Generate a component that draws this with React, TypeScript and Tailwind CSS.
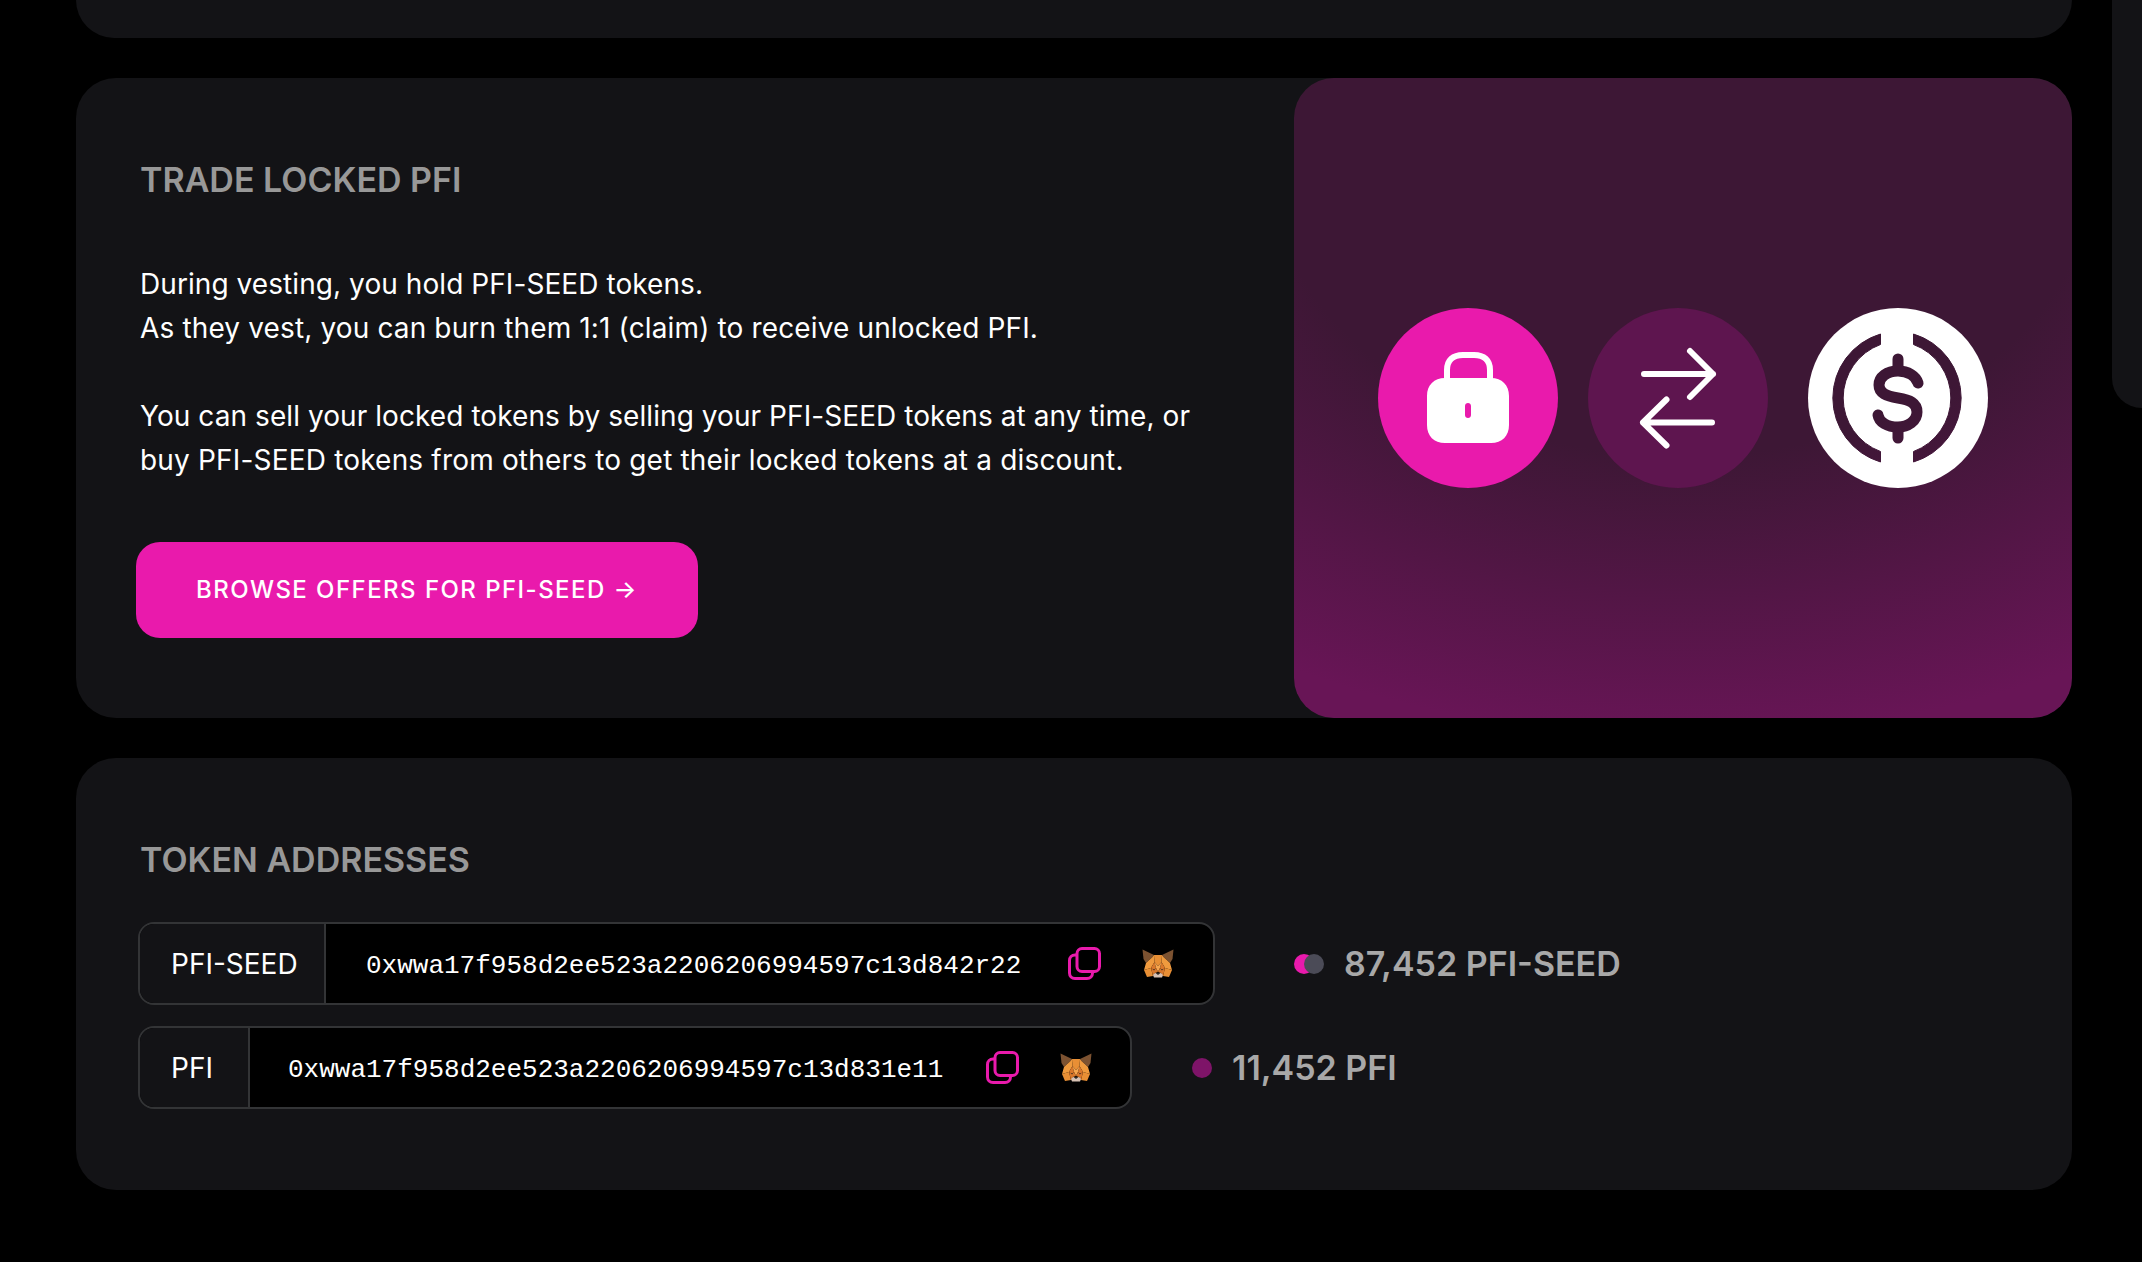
import React from "react";

const inter = { fontFamily: "Inter, 'Noto Sans', sans-serif" };

function CopyIcon() {
  return (
    <svg width="33" height="33" viewBox="0 0 33 33" fill="none" stroke="#e91aac" strokeWidth="3" className="shrink-0">
      <rect x="9" y="1.5" width="22.5" height="23" rx="5" />
      <path d="M9 8 H7 C3.8 8 1.5 10.3 1.5 13.5 V26 C1.5 29 3.8 31.5 7 31.5 H19 C22.2 31.5 24.5 29.2 24.5 26 V24.5" />
    </svg>
  );
}

function Fox() {
  return (
    <svg width="32" height="29" viewBox="0 0 32 29" className="shrink-0">
      <polygon points="0.5,0.5 12,6 10.5,8 4,14 1.5,10" fill="#7c5231" />
      <polygon points="31.5,0.5 20,6 21.5,8 28,14 30.5,10" fill="#7c5231" />
      <polygon points="12,6 20,6 19.5,13 16,17 12.5,13" fill="#e88f35" />
      <polygon points="4,14 10.5,8 12,6 12.5,13 9,19 2,21" fill="#ef9a3e" />
      <polygon points="28,14 21.5,8 20,6 19.5,13 23,19 30,21" fill="#ef9a3e" />
      <polygon points="2,21 9,19 11,27 5,28" fill="#e88f35" />
      <polygon points="30,21 23,19 21,27 27,28" fill="#e88f35" />
      <polygon points="9,19 12.5,13 14,19 12,21" fill="#d9772b" />
      <polygon points="23,19 19.5,13 18,19 20,21" fill="#d9772b" />
      <polygon points="12.5,13 16,17 19.5,13 18,19 16,23 14,19" fill="#f5a54e" />
      <polygon points="9,19 12,21 14,19 16,23 13,24 11,27" fill="#d9772b" />
      <polygon points="23,19 20,21 18,19 16,23 19,24 21,27" fill="#d9772b" />
      <polygon points="11,26 13,24 19,24 21,26 20,28.5 12,28.5" fill="#d7c1b3" />
      <polygon points="13.5,24 18.5,24 16,26" fill="#2f2a28" />
      <polygon points="11,20 13,20.5 12,21.5" fill="#2f2a28" />
      <polygon points="21,20 19,20.5 20,21.5" fill="#2f2a28" />
    </svg>
  );
}

function AddressRow({ label, address, cellClass, bodyClass, copyClass }: { label: string; address: string; cellClass: string; bodyClass: string; copyClass: string }) {
  return (
    <div className="flex h-[83px] w-fit items-stretch overflow-hidden rounded-2xl border-2 border-[#333436] bg-black">
      <div className={`flex items-center border-r-2 border-[#333436] bg-[#131316] pl-[31px] text-[28px] text-white ${cellClass}`} style={inter}>
        {label}
      </div>
      <div className={`flex items-center ${bodyClass}`}>
        <span className="w-[655px] pt-[6px] text-[26px] text-white" style={{ fontFamily: "'Liberation Mono', monospace" }}>
          {address}
        </span>
        <span className={copyClass}><CopyIcon /></span>
        <span className="ml-[41px]"><Fox /></span>
      </div>
    </div>
  );
}

export default function App() {
  return (
    <div className="flex h-[1262px] w-[2142px] overflow-hidden bg-black" style={inter}>
      <main className="flex w-[2112px] flex-col gap-[40px] pl-[76px] pr-[40px]">
        <div className="h-[38px] rounded-b-[40px] bg-[#131316]" />

        <section className="flex h-[640px] rounded-[40px] bg-[#131316]">
          <div className="flex-1 pl-[64px] pt-[82px]">
            <h2 className="text-[34px] leading-[40px] font-[560] text-[#989898] uppercase">Trade locked PFI</h2>
            <div className="mt-[62px] text-[28px] leading-[44px] text-white">
              <p className="tracking-[0.07px]">During vesting, you hold PFI-SEED tokens.</p>
              <p className="tracking-[0.14px]">As they vest, you can burn them 1:1 (claim) to receive unlocked PFI.</p>
              <p className="mt-[44px] tracking-[0.07px]">You can sell your locked tokens by selling your PFI-SEED tokens at any time, or</p>
              <p className="tracking-[0.18px]">buy PFI-SEED tokens from others to get their locked tokens at a discount.</p>
            </div>
            <button className="-ml-[4px] mt-[60px] flex h-[96px] w-[562px] items-center justify-center rounded-[24px] bg-[#e91aac] text-[24px] font-medium tracking-[1.45px] text-white uppercase">
              Browse offers for PFI-SEED →
            </button>
          </div>
          <div className="flex w-[778px] items-center justify-center rounded-[40px] bg-[radial-gradient(ellipse_105%_88%_at_50%_15%,#3d1735_50%,#681556_100%)]">
            <div className="relative flex items-center justify-center rounded-full">
              <div className="flex size-[180px] items-center justify-center rounded-full bg-[#e91aac]">
                <svg width="180" height="180" viewBox="0 0 180 180" fill="none">
                  <path d="M69 72 V62 C69 52 75 47 85 47 H96 C106 47 112 52 112 62 V72" stroke="#fff" strokeWidth="6" />
                  <path fillRule="evenodd" clipRule="evenodd" fill="#fff" d="M67 70 H113 C124 70 131 77 131 88 V117 C131 128 124 135 113 135 H67 C56 135 49 128 49 117 V88 C49 77 56 70 67 70 Z M90 95 C88.3 95 87 96.3 87 98 V107 C87 108.7 88.3 110 90 110 C91.7 110 93 108.7 93 107 V98 C93 96.3 91.7 95 90 95 Z" />
                </svg>
              </div>
              <div className="ml-[30px] flex size-[180px] items-center justify-center rounded-full bg-[#5e154f]">
                <svg width="180" height="180" viewBox="0 0 180 180" fill="none" stroke="#fff" strokeWidth="6" strokeLinecap="round" strokeLinejoin="round">
                  <path d="M56 66 H125 M102 43 L125 66 L102 89" />
                  <path d="M124 114.5 H55 M78.5 91.5 L55 114.5 L78.5 137.5" />
                </svg>
              </div>
              <div className="ml-[40px] size-[180px]">
                <svg width="180" height="180" viewBox="0 0 180 180">
                  <defs>
                    <mask id="usdc">
                      <circle cx="90" cy="90" r="90" fill="#fff" />
                      <g fill="#000" stroke="#000" strokeWidth="1" strokeLinejoin="round">
                        <path d="M72.5 26 A66.8 66.8 0 0 0 72.5 154 L72.5 143.5 A57 57 0 0 1 72.5 36.5 Z" />
                        <path d="M105.5 26 A66.8 66.8 0 0 1 105.5 154 L105.5 143.5 A57 57 0 0 0 105.5 36.5 Z" />
                      </g>
                      <g fill="none" stroke="#000" strokeWidth="11" strokeLinecap="round">
                        <path d="M110 75 C108 68 100 63 90 63 C79 63 71 69 71 77 C71 85 78 88 90 90 C102 92 109 95 109 104 C109 113 100 119 90 119 C79 119 71 114 70 107" />
                        <path d="M90 51 V62 M90 120 V130" />
                      </g>
                    </mask>
                  </defs>
                  <rect width="180" height="180" fill="#fff" mask="url(#usdc)" />
                </svg>
              </div>
            </div>
          </div>
        </section>

        <section className="h-[432px] rounded-[40px] bg-[#131316] pl-[62px] pt-[78px]">
          <h2 className="pl-[2px] text-[34px] leading-[48px] font-[560] text-[#989898] uppercase">Token addresses</h2>
          <div className="mt-[38px] flex flex-col gap-[21px]">
            <div className="flex items-center">
              <AddressRow label="PFI-SEED" address="0xwwa17f958d2ee523a2206206994597c13d842r22" cellClass="w-[186px]" bodyClass="pl-10 pr-[39px]" copyClass="ml-[47px]" />
              <div className="ml-[79px] flex items-center">
                <span className="size-[20px] rounded-full bg-[#e91aac]" />
                <span className="-ml-[10px] size-[20px] rounded-full bg-[#4b4b57]" />
              </div>
              <span className="ml-[20px] text-[34px] font-[560] text-[#a8a8a8]">87,452 PFI-SEED</span>
            </div>
            <div className="flex items-center">
              <AddressRow label="PFI" address="0xwwa17f958d2ee523a2206206994597c13d831e11" cellClass="w-[110px]" bodyClass="pl-[38px] pr-[38px]" copyClass="ml-[43px]" />
              <span className="ml-[60px] size-[20px] rounded-full bg-[#7e1468]" />
              <span className="ml-[20px] text-[34px] font-[560] text-[#a8a8a8]">11,452 PFI</span>
            </div>
          </div>
        </section>
      </main>
      <aside className="h-[408px] w-[30px] rounded-bl-[40px] bg-[#131316]" />
    </div>
  );
}
